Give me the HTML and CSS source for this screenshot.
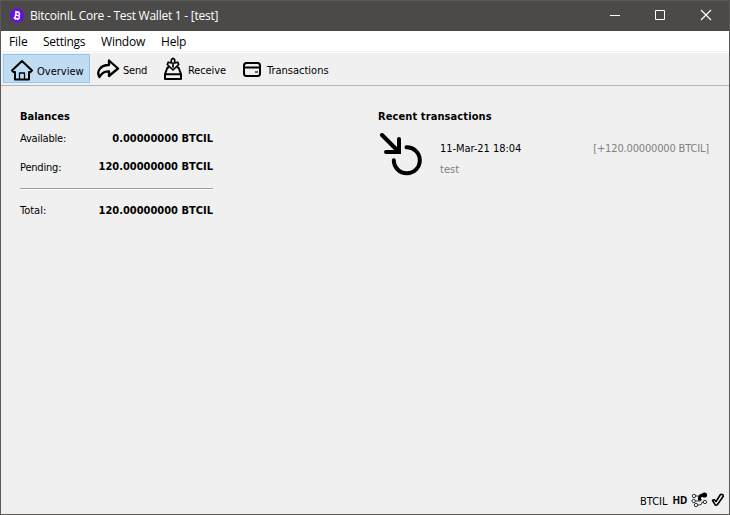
FILE: index.html
```html
<!DOCTYPE html>
<html lang="en">
<head>
<meta charset="utf-8">
<title>BitcoinIL Core</title>
<link rel="stylesheet" href="styles.css">
</head>
<body>
<div class="window">
  <header class="titlebar">
    <svg class="logo" width="16" height="16" viewBox="0 0 16 16"><circle cx="8" cy="7.500" r="7.200" fill="#6610e0"/><g transform="translate(0 -.5) rotate(12 8 8)" fill="none" stroke="#fff" stroke-width="1.500"><path d="M6.500 4.700v6.600M5.300 4.800h3.400q1.500 0 1.500 1.500T8.700 7.900H6.500h2.600q1.600 0 1.600 1.700T9 11.200H5.300"/><path d="M7.200 3.400v1.400M9 3.400v1.400M7.200 11.200v1.400M9 11.200v1.400" stroke-width="1"/></g></svg>
    <span class="caption">BitcoinIL Core - Test Wallet 1 - [test]</span>
    <div class="controls">
      <svg width="46" height="30" viewBox="0 0 46 30"><path d="M18 14.500h10" stroke="#fff"/></svg>
      <svg width="46" height="30" viewBox="0 0 46 30"><path d="M17.500 9.500h9v9h-9z" fill="none" stroke="#fff"/></svg>
      <svg width="46" height="30" viewBox="0 0 46 30"><path d="M17 9l10 10M27 9l-10 10" stroke="#fff" stroke-width="1.200"/></svg>
    </div>
  </header>
  <nav class="menubar"><span class="m-file">File</span><span class="m-settings">Settings</span><span class="m-window">Window</span><span class="m-help">Help</span></nav>
  <div class="toolbar">
    <div class="tool active">
      <svg width="24" height="24" viewBox="0 0 24 24" fill="none" stroke="#000" stroke-width="2" stroke-linejoin="round" stroke-linecap="round"><path d="M2 12.500L12 3l10 9.500-1.500 1.500H19v7.500H5V14H3.500z"/><path d="M9.500 21v-6h5v6" stroke-width="1.300"/></svg>
      <span>Overview</span>
    </div>
    <div class="tool send">
      <svg width="24" height="24" viewBox="0 0 24 24" fill="none" stroke="#000" stroke-width="2.300" stroke-linejoin="round"><path d="M13 3.500l9 8-9 7.500v-4.500c-5-.5-7.500 2-9.500 5.500-3-4-.5-12 9.500-12z"/></svg>
      <span>Send</span>
    </div>
    <div class="tool receive">
      <svg width="24" height="24" viewBox="0 0 24 24" fill="none" stroke="#000" stroke-width="2" stroke-linejoin="round" stroke-linecap="round"><path d="M7.500 10.500H6.500L4 17v5h16v-5l-2.500-6.500h-1M4 17.200h16"/><path d="M10.300 6V3Q12 -.2 13.700 3v3M10.300 6L7.300 5.200 6.300 7.500 12 13l5.700-5.500-1-2.300-3 .8M12 6v4" stroke-width="1.700"/></svg>
      <span>Receive</span>
    </div>
    <div class="tool transactions">
      <svg width="24" height="24" viewBox="0 0 24 24" fill="none" stroke="#000" stroke-width="2"><rect x="4" y="6" width="16" height="13" rx="2.500"/><path d="M4 10.500h16"/><path d="M15 15h3" stroke-width="1.200"/></svg>
      <span>Transactions</span>
    </div>
  </div>
  <main class="content">
    <section class="balances">
      <h2>Balances</h2>
      <div class="row available"><span class="l-av">Available:</span><b>0.00000000 BTCIL</b></div>
      <div class="row pending"><span class="l-pe">Pending:</span><b>120.00000000 BTCIL</b></div>
      <hr>
      <div class="row total"><span>Total:</span><b>120.00000000 BTCIL</b></div>
    </section>
    <section class="recent">
      <h2 class="h-rec">Recent transactions</h2>
      <div class="transaction">
        <svg width="44" height="44" viewBox="0 0 44 44" fill="none" stroke="#000" stroke-width="4" stroke-linecap="round"><path d="M4 2l17 17"/><path d="M21 6V19H8"/><path d="M28.500 14.300A13 13 0 1 1 15.800 27.300" /></svg>
        <div class="details">
          <div class="line"><span class="date">11-Mar-21 18:04</span><span class="amount">[+120.00000000 BTCIL]</span></div>
          <span class="label">test</span>
        </div>
      </div>
    </section>
  </main>
  <footer class="statusbar">
    <span class="unit">BTCIL</span>
    <span class="hd">HD</span>
    <svg class="peers" width="18" height="16" viewBox="0 0 18 16" fill="none" stroke="#333" stroke-width="1"><circle cx="3" cy="4" r="1.700"/><circle cx="2.700" cy="9" r="1.700"/><circle cx="5" cy="13" r="1.700"/><circle cx="14" cy="10" r="1.700"/><path d="M4.700 4h3M4.500 9h4q2 0 2-2M6.700 13h1.500q3 0 3-3h1"/><path d="M8.500 8.500V6q0-3 4-3" stroke="#000" stroke-width="3"/><circle cx="13.500" cy="3" r="2.600" fill="#000" stroke="none"/></svg>
    <svg class="synced" width="14" height="16" viewBox="0 0 14 16" fill="none" stroke="#000" stroke-width="1.600" stroke-linejoin="round"><path d="M1.500 8.500Q3 6.500 5 9.500L9.500 2.500Q12.500 2 12.300 4.200L6.500 12.500Q5 14 3.800 12.200z"/></svg>
  </footer>
</div>
</body>
</html>
```
FILE: styles.css
```css
* { box-sizing: border-box; }
body { margin: 0; font: 11px/14px "DejaVu Sans Condensed", "DejaVu Sans", sans-serif; font-stretch: condensed; color: #000; }
.window { width: 730px; height: 515px; display: flex; flex-direction: column; background: #f0f0f0; border: 1px solid #5a5957; }
svg { display: block; flex: none; }
span, b, h2 { white-space: nowrap; }
.titlebar { height: 30px; flex: none; display: flex; align-items: center; background: #4c4a48; color: #fff; font: 12px/16px "Open Sans", sans-serif; padding-left: 8px; }
.caption { margin-left: 5px; letter-spacing: -0.25px; }
.controls { display: flex; margin-left: auto; margin-right: -1px; }
.menubar { height: 22px; flex: none; display: flex; background: #fff; border-bottom: 1px solid #fff; box-shadow: inset 0 -1px #f0f0f0; font: 12px/20px "Open Sans", sans-serif; padding: 1px 0 0 8px; }
.m-file { width: 34px; letter-spacing: -0.1px; }
.m-settings { width: 58px; letter-spacing: -0.3px; }
.m-window { width: 60px; letter-spacing: -0.2px; }
.m-help { letter-spacing: -0.2px; }
.toolbar { height: 33px; flex: none; display: flex; padding: 1px 0 0 2px; border-bottom: 1px solid #b4b4b4; }
.tool { height: 29px; display: flex; align-items: center; gap: 3px; padding: 3px 0 0 6px; border: 1px solid transparent; }
.tool span { padding-top: 3px; }
.tool.active { width: 87px; background: #c0dcf3; border-color: #90c8f6; }
.tool.send { width: 66px; padding-left: 5px; padding-top: 0; letter-spacing: -0.2px; }
.tool.send span { padding-top: 4px; }
.tool.receive { width: 79px; padding-left: 4px; padding-top: 0; }
.tool.receive span { padding-top: 4px; letter-spacing: -0.1px; }
.tool.transactions { padding-left: 4px; padding-top: 1px; }
.content { flex: 1; display: flex; padding: 24px 20px 0 19px; }
h2 { margin: 0; font: bold 11px/14px "DejaVu Sans Condensed", "DejaVu Sans", sans-serif; font-stretch: condensed; }
.h-rec { letter-spacing: 0.1px; }
.balances { width: 193px; }
.row { display: flex; justify-content: space-between; align-items: center; height: 14px; }
.l-av, .l-pe { letter-spacing: -0.2px; }
.l-pe { padding-top: 2px; }
.available { margin-top: 8px; }
.pending { margin-top: 14px; }
hr { margin: 14px 0 14px; border: 0; border-top: 1px solid #a0a0a0; border-bottom: 1px solid #fff; height: 2px; }
.recent { margin-left: 165px; flex: 1; }
.transaction { display: flex; margin-top: 9px; }
.details { flex: 1; margin: 9px 0 0 18px; }
.line { display: flex; justify-content: space-between; margin-bottom: 7px; }
.date { letter-spacing: -0.05px; }
.amount { letter-spacing: -0.16px; }
.amount, .label { color: #808080; }
.statusbar { height: 26px; flex: none; display: flex; align-items: center; padding: 0 5px 2px 639px; }
.unit { padding-top: 3px; }
.hd { font: bold 10px/14px "Noto Sans", sans-serif; margin-left: 5px; letter-spacing: -0.3px; }
.peers { margin-left: 4px; }
.synced { margin-left: 2px; }
```
